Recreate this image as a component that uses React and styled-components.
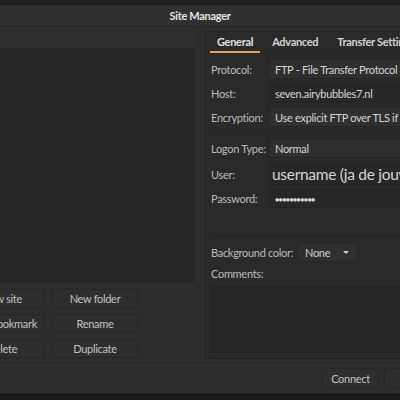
import React from "react"
import styled, { createGlobalStyle } from "styled-components"

const Global = createGlobalStyle`
  html, body {
    margin: 0;
    padding: 0;
    background: #1b1b1b;
    overflow: hidden;
    font-family: Lato, "Noto Sans", sans-serif;
    letter-spacing: -0.3px;
  }
`

const Page = styled.div`
  width: 400px;
  height: 400px;
  overflow: hidden;
  background: #1b1b1b;
`

const TopStrip = styled.div`
  height: 5px;
  background: #1f1f1f;
`

const Window = styled.div`
  margin-left: -200px;
  width: 800px;
  height: 388px;
  background: #2d2d2d;
  display: flex;
  flex-direction: column;
`

const TitleBar = styled.div`
  height: 21px;
  display: flex;
  align-items: center;
  justify-content: center;
  background: #303030;
  border-bottom: 1px solid #242424;
  color: #e4e4e4;
  font-weight: 700;
  font-size: 11px;
`

const Body = styled.div`
  flex: 1;
  display: flex;
`

const LeftCol = styled.div`
  width: 395px;
  display: flex;
  flex-direction: column;
`

const LeftHeader = styled.div`
  height: 21px;
  background: #2f2f2f;
`

const Tree = styled.div`
  height: 234px;
  background: #262626;
`

const ButtonGrid = styled.div`
  margin: 7px 0 0 159px;
  display: grid;
  grid-template-columns: 86px 86px;
  grid-auto-rows: 19px;
  gap: 6px 7px;
`

const Button = styled.div`
  display: flex;
  align-items: center;
  justify-content: center;
  background: #2e2e2e;
  border: 1px solid #262626;
  border-radius: 3px;
  color: #c2c2c2;
  font-size: 11px;
  box-sizing: border-box;
  width: ${p => (p.$w ? p.$w + "px" : "auto")};
  height: ${p => (p.$h ? p.$h + "px" : "auto")};
`

const RightCol = styled.div`
  margin-left: 10px;
  padding-top: 4px;
  flex: 1;
`

const Notebook = styled.div`
  height: 326px;
  border: 1px solid #232323;
  background: #2a2a2a;
  display: flex;
  flex-direction: column;
`

const TabBar = styled.div`
  height: 21px;
  display: flex;
  padding-left: 4px;
  border-bottom: 1px solid #242424;
`

const Tab = styled.div`
  padding: 0 ${p => (p.$first ? 7 : 0)}px 0 ${p => (p.$first ? 7 : 0)}px;
  margin-right: ${p => (p.$first ? 12 : 19)}px;
  display: flex;
  align-items: center;
  font-size: 11px;
  font-weight: 700;
  color: ${p => (p.$active ? "#e2e2e2" : "#d2d2d2")};
  border-bottom: 2px solid ${p => (p.$active ? "#e0a458" : "transparent")};
  white-space: nowrap;
`

const Form = styled.div`
  padding: 5px 0 0 5px;
  display: flex;
  flex-direction: column;
`

const Row = styled.div`
  display: flex;
  align-items: center;
  height: ${p => p.$h || 20}px;
  margin-bottom: ${p => (p.$mb !== undefined ? p.$mb : 4)}px;
`

const Label = styled.div`
  width: ${p => p.$w || 57}px;
  flex-shrink: 0;
  font-size: 11px;
  color: #bcbcbc;
  white-space: nowrap;
`

const Field = styled.div`
  flex: 1;
  height: 100%;
  box-sizing: border-box;
  display: flex;
  align-items: center;
  padding-left: ${p => p.$pl || 6}px;
  background: ${p => (p.$entry ? "#272727" : "#2f2f2f")};
  border: 1px solid #242424;
  border-right: none;
  border-radius: 3px 0 0 3px;
  color: #d6d6d6;
  font-size: ${p => p.$fs || 11}px;
  white-space: nowrap;
  overflow: hidden;
`

const Dots = styled.span`
  font-size: 7px;
  letter-spacing: -0.6px;
  color: #d8d8d8;
`

const Separator = styled.div`
  height: 1px;
  background: #262626;
  margin: ${p => p.$m};
`

const Combo = styled.div`
  width: 61px;
  height: 19px;
  box-sizing: border-box;
  display: flex;
  align-items: center;
  justify-content: space-between;
  padding: 0 8px 0 7px;
  background: #2f2f2f;
  border: 1px solid #262626;
  border-radius: 3px;
  color: #cfcfcf;
  font-size: 11px;
`

const Caret = styled.span`
  width: 0;
  height: 0;
  border-left: 3px solid transparent;
  border-right: 3px solid transparent;
  border-top: 3px solid #cfcfcf;
`

const Comments = styled.div`
  margin-top: 6px;
  height: 65px;
  background: #262626;
  border: 1px solid #222;
  border-right: none;
`

const Footer = styled.div`
  height: 30px;
  border-top: 1px solid #242424;
  display: flex;
  align-items: center;
  padding-left: 522px;
  gap: 5px;
`

export default function App() {
  return (
    <Page>
      <Global />
      <TopStrip />
      <Window>
        <TitleBar>Site Manager</TitleBar>
        <Body>
          <LeftCol>
            <LeftHeader />
            <Tree />
            <ButtonGrid>
              <Button>New site</Button>
              <Button>New folder</Button>
              <Button>New bookmark</Button>
              <Button>Rename</Button>
              <Button>Delete</Button>
              <Button>Duplicate</Button>
            </ButtonGrid>
          </LeftCol>
          <RightCol>
            <Notebook>
              <TabBar>
                <Tab $active $first>General</Tab>
                <Tab>Advanced</Tab>
                <Tab>Transfer Settings</Tab>
                <Tab>Charset</Tab>
              </TabBar>
              <Form>
                <Row>
                  <Label>Protocol:</Label>
                  <Field>FTP - File Transfer Protocol</Field>
                </Row>
                <Row>
                  <Label>Host:</Label>
                  <Field $entry>seven.airybubbles7.nl</Field>
                </Row>
                <Row $mb={0}>
                  <Label>Encryption:</Label>
                  <Field>Use explicit FTP over TLS if available</Field>
                </Row>
                <Separator $m="6px 0 5px 0" />
                <Row $h={19} $mb={5}>
                  <Label>Logon Type:</Label>
                  <Field>Normal</Field>
                </Row>
                <Row $h={22}>
                  <Label>User:</Label>
                  <Field $entry $fs={15.5} $pl={3}>username (ja de jouwe)</Field>
                </Row>
                <Row $h={19} $mb={0}>
                  <Label>Password:</Label>
                  <Field $entry>
                    <Dots>●●●●●●●●●●●</Dots>
                  </Field>
                </Row>
                <Separator $m="27px 0 7px 0" />
                <Row $h={19} $mb={5}>
                  <Label $w={86}>Background color:</Label>
                  <Combo>
                    None
                    <Caret />
                  </Combo>
                </Row>
                <Label>Comments:</Label>
                <Comments />
              </Form>
            </Notebook>
          </RightCol>
        </Body>
        <Footer>
          <Button $w={57} $h={21}>Connect</Button>
          <Button $w={70} $h={21}>OK</Button>
        </Footer>
      </Window>
    </Page>
  )
}
